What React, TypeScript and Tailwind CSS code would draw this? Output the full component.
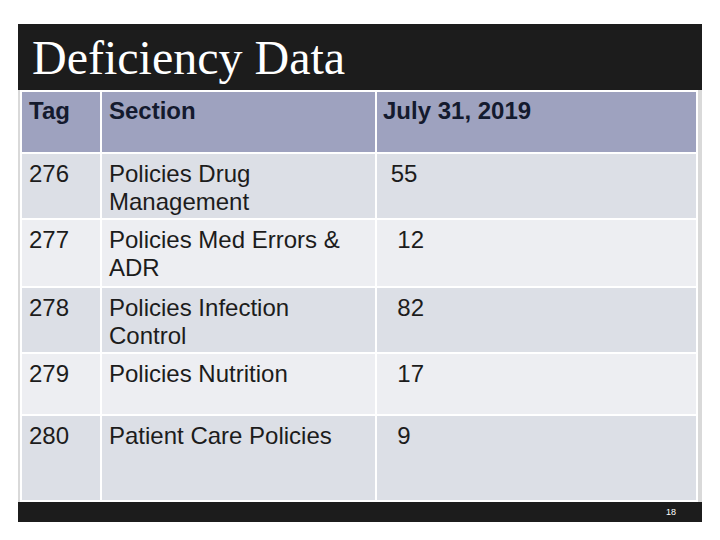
const rows = [
  { tag: "276", section: "Policies Drug Management", count: " 55", h: "h-[64px]", bg: "bg-[#dcdfe6]" },
  { tag: "277", section: "Policies Med Errors & ADR", count: "  12", h: "h-[66px]", bg: "bg-[#edeef2]" },
  { tag: "278", section: "Policies Infection Control", count: "  82", h: "h-[64px]", bg: "bg-[#dcdfe6]" },
  { tag: "279", section: "Policies Nutrition", count: "  17", h: "h-[60px]", bg: "bg-[#edeef2]" },
  { tag: "280", section: "Patient Care Policies", count: "  9", h: "h-[84px]", bg: "bg-[#dcdfe6]" },
];

export default function App() {
  return (
    <div className="w-[720px] h-[540px] bg-white pt-[24px] pl-[18px]">
      <div className="w-[684px] bg-[#1c1c1c]">
        <div className="h-[66px] pl-[14px] pt-[10px]">
          <h1 className="text-[48px] leading-none text-white font-['Liberation_Serif',serif]">
            Deficiency Data
          </h1>
        </div>

        <div className="bg-[#d9d9d9] pl-[2px] pr-[4px]">
          <div className="grid grid-cols-[78px_273px_319px] gap-[2px] bg-white p-[2px] font-['Liberation_Sans',Arial,sans-serif] text-[24px] leading-[28px]">
            <div className="h-[60px] bg-[#9ea2bf] pl-[7px] pt-[5px] font-bold text-[#141a2e]">Tag</div>
            <div className="h-[60px] bg-[#9ea2bf] pl-[7px] pt-[5px] font-bold text-[#141a2e]">Section</div>
            <div className="h-[60px] bg-[#9ea2bf] pl-[6px] pt-[5px] font-bold text-[#141a2e]">July 31, 2019</div>

            {rows.map((row) => (
              <div key={row.tag} className="contents text-[#1c1c1c]">
                <div className={`${row.h} ${row.bg} pl-[7px] pt-[6px]`}>{row.tag}</div>
                <div className={`${row.h} ${row.bg} pl-[7px] pr-[20px] pt-[6px]`}>{row.section}</div>
                <div className={`${row.h} ${row.bg} pl-[7px] pt-[6px] whitespace-pre`}>{row.count}</div>
              </div>
            ))}
          </div>
        </div>

        <div className="h-[20px] flex items-center justify-end pr-[26px]">
          <span className="text-[9px] leading-none text-white font-['Liberation_Sans',Arial,sans-serif]">18</span>
        </div>
      </div>
    </div>
  );
}
